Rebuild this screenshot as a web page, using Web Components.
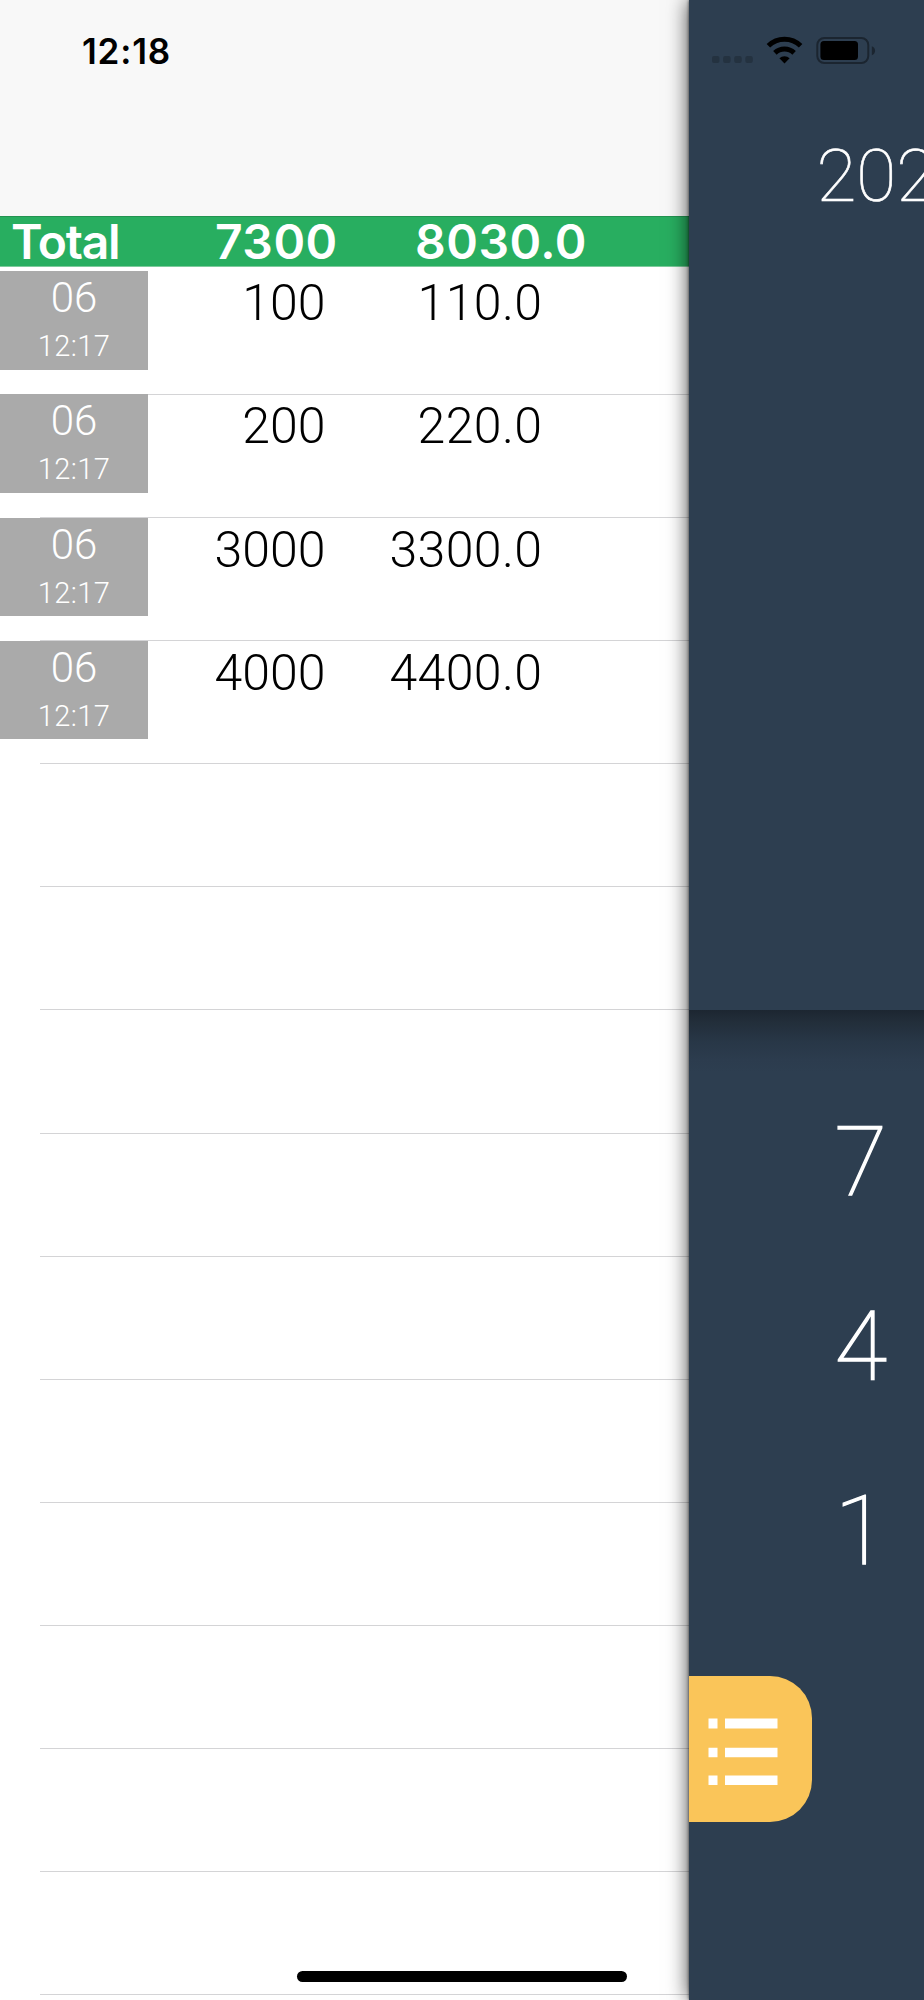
<!DOCTYPE html>
<html lang="en">
<head>
<meta charset="utf-8">
<meta name="viewport" content="width=device-width, initial-scale=1">
<title>Calculator history</title>
<style>
  html, body {
    margin: 0;
    height: 2000px;
    overflow: hidden;
    background: #fff;
    font-family: Inter, "Liberation Sans", sans-serif;
  }
</style>
</head>
<body>
<calc-app>
  <history-drawer slot="drawer" time="12:18"></history-drawer>
  <calc-panel slot="panel">
    <status-icons slot="status"></status-icons>
    <span slot="display">202</span>
    <key-button>7</key-button>
    <key-button>4</key-button>
    <key-button>1</key-button>
    <list-button slot="action"></list-button>
  </calc-panel>
</calc-app>

<script>
const ROW_COUNT = 14;

const totals = ['Total', '7300', '8030.0'];

const entries = [
  {day: '06', time: '12:17', price: '100', taxed: '110.0'},
  {day: '06', time: '12:17', price: '200', taxed: '220.0'},
  {day: '06', time: '12:17', price: '3000', taxed: '3300.0'},
  {day: '06', time: '12:17', price: '4000', taxed: '4400.0'},
];

class BaseElement extends HTMLElement {
  constructor() {
    super();
    this.attachShadow({mode: 'open'});
    const template = document.createElement('template');
    template.innerHTML = this.constructor.markup;
    this.shadowRoot.appendChild(template.content.cloneNode(true));
  }
}

class CalcApp extends BaseElement {
  static markup = `
    <style>
      :host {
        display: flex;
        position: relative;
        height: 2000px;
        width: 924px;
        overflow: hidden;
      }

      ::slotted([slot='drawer']) {
        flex: 0 0 689.4px;
      }

      ::slotted([slot='panel']) {
        flex: 1;
        min-width: 0;
      }

      .home {
        position: absolute;
        left: 297px;
        bottom: 18px;
        width: 330px;
        height: 11px;
        border-radius: 6px;
        background: #000;
        z-index: 2;
      }
    </style>
    <slot name="drawer"></slot>
    <slot name="panel"></slot>
    <div class="home"></div>
  `;
}

class HistoryDrawer extends BaseElement {
  static markup = `
    <style>
      :host {
        display: flex;
        flex-direction: column;
        background: #fff;
      }

      header {
        height: 216.4px;
        box-sizing: border-box;
        padding: 30px 0 0 82px;
        background: #f8f8f8;
        color: #000;
        font-size: 35px;
        line-height: 43px;
        font-weight: 600;
        letter-spacing: 0.8px;
      }

      .rows {
        padding-top: 4.5px;
      }
    </style>
    <header></header>
    <total-bar></total-bar>
    <div class="rows"></div>
  `;

  connectedCallback() {
    this.shadowRoot.querySelector('header').textContent = this.getAttribute('time');
    const fragment = document.createDocumentFragment();

    for (let i = 0; i < ROW_COUNT; i++) {
      const row = document.createElement('history-row');
      row.entry = entries[i];
      fragment.appendChild(row);
    }

    this.shadowRoot.querySelector('.rows').replaceChildren(fragment);
  }
}

class TotalBar extends BaseElement {
  static markup = `
    <style>
      :host {
        display: grid;
        grid-template-columns: 215px 200px 1fr;
        height: 50.4px;
        box-sizing: border-box;
        border-top: 1px solid #239351;
        border-bottom: 1px solid #7dcb9c;
        background: #28ae60;
        color: #fff;
        font-size: 48px;
        line-height: 50px;
        font-weight: 600;
        letter-spacing: 0.5px;
      }

      span:first-of-type {
        padding-left: 11px;
        letter-spacing: -1.2px;
      }
    </style>
  `;

  connectedCallback() {
    totals.forEach((text) => {
      const cell = document.createElement('span');
      cell.textContent = text;
      this.shadowRoot.appendChild(cell);
    });
  }
}

class HistoryRow extends BaseElement {
  static markup = `
    <style>
      :host {
        display: grid;
        grid-template-columns: 148px 177.5px 217px;
        position: relative;
        height: 123.12px;
        font-family: Roboto, "Liberation Sans", sans-serif;
        font-weight: 300;
        color: #000;
      }

      /* separator is inset like a table view cell */
      :host::after {
        content: '';
        position: absolute;
        left: 40px;
        right: 0;
        bottom: -0.5px;
        height: 1px;
        background: #d4d4d6;
      }

      .date {
        height: 98.6px;
        background: #aaa;
        color: #fff;
        text-align: center;
      }

      .day {
        font-size: 42px;
        line-height: 50px;
        padding-top: 2px;
      }

      .time {
        font-size: 29px;
        line-height: 34px;
        padding-top: 6px;
        letter-spacing: 0.4px;
      }

      .value {
        font-size: 50px;
        line-height: 58px;
        padding-top: 3px;
        text-align: right;
      }

      .value:last-of-type {
        letter-spacing: 0.4px;
      }
    </style>
  `;

  connectedCallback() {
    if (!this.entry) {
      return;
    }

    const {day, time, price, taxed} = this.entry;
    const content = document.createElement('template');
    content.innerHTML = `
      <div class="date">
        <div class="day">${day}</div>
        <div class="time">${time}</div>
      </div>
      <div class="value">${price}</div>
      <div class="value">${taxed}</div>
    `;
    this.shadowRoot.appendChild(content.content);
  }
}

class CalcPanel extends BaseElement {
  static markup = `
    <style>
      :host {
        display: flex;
        flex-direction: column;
        position: relative;
        z-index: 1;
        background: #2d3e50;
        color: #fff;
        font-family: Roboto, "Liberation Sans", sans-serif;
        font-weight: 100;
        box-shadow: 0 0 3px rgba(0, 0, 0, 0.65), 0 0 20px rgba(0, 0, 0, 0.75);
      }

      .screen {
        height: 1010px;
      }

      .status {
        height: 133px;
      }

      .display {
        padding-left: 127px;
        font-size: 73px;
        line-height: 86px;
        white-space: nowrap;
        overflow: hidden;
        -webkit-text-stroke: 0.6px #fff;
      }

      .keys {
        flex: 1;
        padding-top: 60px;
        background: linear-gradient(#1c2631, #222e3a 12px, #283747 32px, #2c3c4e 50px, #2d3e50 62px);
      }

      .action {
        padding-top: 51.5px;
      }
    </style>
    <div class="screen">
      <div class="status"><slot name="status"></slot></div>
      <div class="display"><slot name="display"></slot></div>
    </div>
    <div class="keys">
      <slot></slot>
      <div class="action"><slot name="action"></slot></div>
    </div>
  `;
}

class StatusIcons extends BaseElement {
  static markup = `
    <style>
      :host {
        display: flex;
        padding: 36px 0 0 23px;
      }

      svg {
        display: block;
      }
    </style>
    <svg width="164" height="29" viewBox="0 0 164 29">
      <g fill="#243240">
        <rect x="0" y="20" width="7.5" height="7" rx="2"/>
        <rect x="11.1" y="20" width="7.5" height="7" rx="2"/>
        <rect x="22.2" y="20" width="7.5" height="7" rx="2"/>
        <rect x="33.3" y="20" width="7.5" height="7" rx="2"/>
      </g>
      <g fill="none" stroke="#000" stroke-width="5">
        <path d="M56.4 9.7a23 23 0 0 1 32.2 0"/>
        <path d="M62.9 16.9a13.7 13.7 0 0 1 19.2 0"/>
      </g>
      <path d="M67.4 22.2a7.4 7.4 0 0 1 10.2 0L72.5 27.4z"/>
      <rect x="105.3" y="2" width="51" height="25" rx="7" fill="none" stroke="#1b2530" stroke-width="2"/>
      <rect x="108.4" y="5" width="37.6" height="19" rx="3.5"/>
      <path d="M159.8 10.2c4.4 1.6 4.4 7.4 0 9z" fill="#1b2530"/>
    </svg>
  `;
}

class KeyButton extends BaseElement {
  static markup = `
    <style>
      :host {
        display: block;
        width: 343px;
        height: 184.7px;
        line-height: 184.7px;
        font-size: 96px;
        text-align: center;
        -webkit-text-stroke: 1.3px #fff;
      }
    </style>
    <slot></slot>
  `;
}

class ListButton extends BaseElement {
  static markup = `
    <style>
      :host {
        display: block;
        width: 122.5px;
        height: 146.5px;
        border-radius: 0 42px 42px 0;
        background: #fac559;
      }

      svg {
        display: block;
      }
    </style>
    <svg width="122" height="146" viewBox="0 0 122 146" fill="#fff">
      <path d="M19.5 42.5h9v10h-9zM36 42.5h52.5v10h-52.5z"/>
      <path d="M19.5 71.7h9v9.5h-9zM36 71.7h52.5v9.5h-52.5z"/>
      <path d="M19.5 99.5h9v9.5h-9zM36 99.5h52.5v9.5h-52.5z"/>
    </svg>
  `;
}

window.customElements.define('key-button', KeyButton);
window.customElements.define('list-button', ListButton);
window.customElements.define('status-icons', StatusIcons);
window.customElements.define('total-bar', TotalBar);
window.customElements.define('history-row', HistoryRow);
window.customElements.define('history-drawer', HistoryDrawer);
window.customElements.define('calc-panel', CalcPanel);
window.customElements.define('calc-app', CalcApp);
</script>
</body>
</html>
